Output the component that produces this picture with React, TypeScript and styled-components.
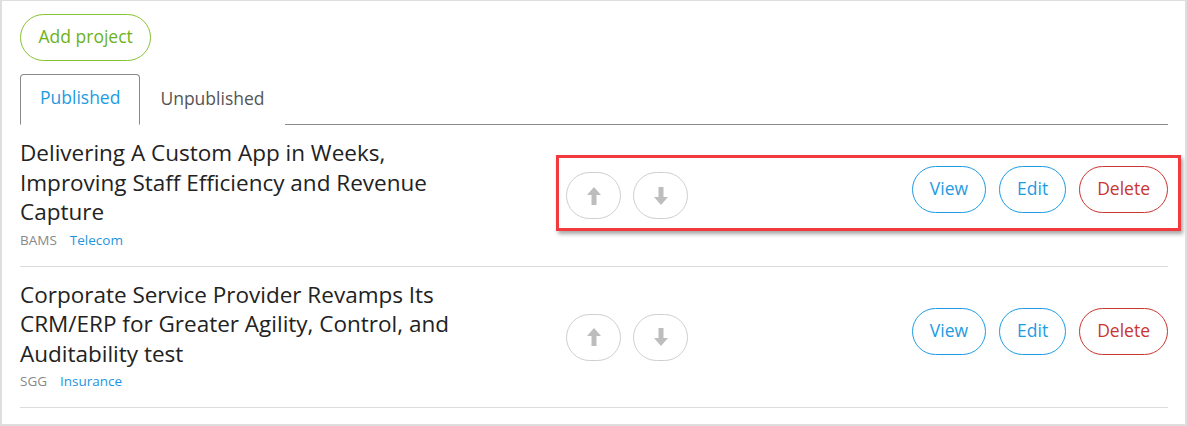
import React from "react";
import styled, { createGlobalStyle } from "styled-components";

const Global = createGlobalStyle`
  html, body { margin: 0; padding: 0; background: #fff; }
  body { font-family: "Open Sans", "Noto Sans", sans-serif; }
  * { box-sizing: border-box; }
`;

const Frame = styled.div`
  position: relative;
  width: 1187px;
  height: 426px;
  border: 2px solid #dedede;
  border-top-width: 1px;
  padding: 13px 17px 0 18px;
  overflow: hidden;
`;

const AddButton = styled.button`
  height: 47px;
  padding: 0 17.5px 3px;
  border: 1px solid #86c232;
  border-radius: 24px;
  background: #fff;
  color: #6cb21c;
  font-family: "Open Sans", sans-serif;
  font-size: 17.5px;
  cursor: pointer;
`;

const TabBar = styled.div`
  display: flex;
  margin-top: 13px;
  border-bottom: 1px solid #8a8a8a;
  height: 51px;
`;

const Tab = styled.div<{ $active?: boolean }>`
  height: 51px;
  padding: 0 19px 5px;
  display: flex;
  align-items: center;
  font-size: 17.5px;
  color: ${(p) => (p.$active ? "#1e9be3" : "#555")};
  border: 1px solid ${(p) => (p.$active ? "#8a8a8a" : "transparent")};
  border-bottom: ${(p) => (p.$active ? "1px solid #fff" : "none")};
  border-radius: 4px 4px 0 0;
  background: #fff;
`;

const Row = styled.div`
  display: grid;
  grid-template-columns: 546px auto 1fr;
  align-items: start;
  padding: 13px 0 17px;
  border-bottom: 1px solid #dcdcdc;
`;

const Info = styled.div`
  max-width: 460px;
`;

const Title = styled.div`
  font-size: 22.5px;
  line-height: 29.5px;
  color: #222;
`;

const Meta = styled.div`
  display: flex;
  gap: 13px;
  margin-top: 4px;
  font-size: 13.5px;
  line-height: 18px;
`;

const Client = styled.span`
  color: #888;
`;

const Industry = styled.span`
  color: #1e95e0;
`;

const ArrowGroup = styled.div`
  display: flex;
  gap: 12px;
  margin-top: 34px;
`;

const ArrowButton = styled.button`
  width: 55px;
  height: 47px;
  border: 1px solid #cfcfcf;
  border-radius: 24px;
  background: #fff;
  display: flex;
  align-items: center;
  justify-content: center;
  padding: 0;
`;

const Actions = styled.div`
  display: flex;
  justify-content: flex-end;
  gap: 13px;
  margin-top: 28px;
`;

const ActionButton = styled.button<{ $color: string }>`
  height: 47px;
  padding: 0 17px 3px;
  border: 1px solid ${(p) => p.$color};
  border-radius: 24px;
  background: #fff;
  color: ${(p) => p.$color};
  font-family: "Open Sans", sans-serif;
  font-size: 17.5px;
  cursor: pointer;
`;

const Highlight = styled.div`
  position: absolute;
  left: 554px;
  top: 154px;
  width: 625px;
  height: 76px;
  border: 3px solid #f2393d;
  box-shadow: 2px 3px 4px rgba(0, 0, 0, 0.35);
  pointer-events: none;
`;

const Arrow = ({ down }: { down?: boolean }) => (
  <svg width="14" height="18" viewBox="0 0 14 18" style={{ transform: down ? "rotate(180deg)" : undefined }}>
    <path d="M7 0 L14 8 L9.5 8 L9.5 18 L4.5 18 L4.5 8 L0 8 Z" fill="#bdbdbd" />
  </svg>
);

const projects = [
  {
    title: "Delivering A Custom App in Weeks, Improving Staff Efficiency and Revenue Capture",
    client: "BAMS",
    industry: "Telecom",
  },
  {
    title: "Corporate Service Provider Revamps Its CRM/ERP for Greater Agility, Control, and Auditability test",
    client: "SGG",
    industry: "Insurance",
  },
];

export default function App() {
  return (
    <>
      <Global />
      <Frame>
        <AddButton>Add project</AddButton>
        <TabBar>
          <Tab $active>Published</Tab>
          <Tab>Unpublished</Tab>
        </TabBar>
        {projects.map((p) => (
          <Row key={p.title}>
            <Info>
              <Title>{p.title}</Title>
              <Meta>
                <Client>{p.client}</Client>
                <Industry>{p.industry}</Industry>
              </Meta>
            </Info>
            <ArrowGroup>
              <ArrowButton aria-label="Move up">
                <Arrow />
              </ArrowButton>
              <ArrowButton aria-label="Move down">
                <Arrow down />
              </ArrowButton>
            </ArrowGroup>
            <Actions>
              <ActionButton $color="#1e9be3">View</ActionButton>
              <ActionButton $color="#1e9be3">Edit</ActionButton>
              <ActionButton $color="#c9352f">Delete</ActionButton>
            </Actions>
          </Row>
        ))}
        <Highlight />
      </Frame>
    </>
  );
}
